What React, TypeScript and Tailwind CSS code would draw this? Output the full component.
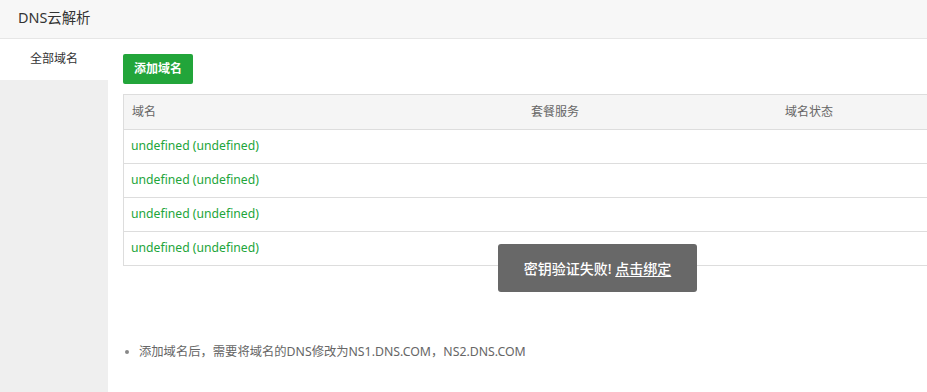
import React from "react";

const font = { fontFamily: '"Noto Sans", "Noto Sans CJK SC", sans-serif' };

export default function App() {
  const rows = [0, 1, 2, 3];
  return (
    <div className="relative w-[927px] h-[392px] overflow-hidden bg-white text-[#333]" style={font}>
      <div className="h-[39px] bg-[#f7f7f7] border-b border-[#e6e6e6] flex items-center pl-[18px] pb-[2px] text-[14.4px] text-[#333]">
        DNS云解析
      </div>
      <div className="flex h-[353px]">
        <div className="w-[108px] flex flex-col">
          <div className="h-[41px] bg-white flex items-center justify-center text-[12px] text-[#333] pb-[1px]">全部域名</div>
          <div className="flex-1 bg-[#efefef]" />
        </div>
        <div className="flex-1 overflow-hidden pl-[15px] pt-[15px]">
          <button className="h-[30px] w-[70px] rounded-[2px] bg-[#22a53a] text-white text-[12px] font-semibold flex items-center justify-center">
            添加域名
          </button>
          <div className="mt-[10px] w-[1000px] border border-[#dddddd] text-[12px]">
            <div className="grid grid-cols-[399px_254px_1fr] h-[34px] bg-[#f5f5f5] items-center text-[#666]">
              <div className="pl-[8px]">域名</div>
              <div className="pl-[8px]">套餐服务</div>
              <div className="pl-[8px]">域名状态</div>
            </div>
            {rows.map((r) => (
              <div key={r} className="grid grid-cols-[399px_254px_1fr] h-[34px] items-center border-t border-[#dddddd] text-[12.2px]">
                <div className="pl-[7px] text-[#22a53a]">undefined (undefined)</div>
                <div />
                <div />
              </div>
            ))}
          </div>
          <ul className="mt-[77px] text-[12.3px] text-[#666] pl-[2px]">
            <li className="flex items-center">
              <span className="w-[4px] h-[4px] rounded-full bg-[#888] mr-[10px]" />
              添加域名后，需要将域名的DNS修改为NS1.DNS.COM，NS2.DNS.COM
            </li>
          </ul>
        </div>
      </div>
      <div className="absolute left-[498px] top-[244px] w-[199px] h-[48px] rounded-[3px] bg-[#686868] flex items-center justify-center text-white text-[14px] font-medium">
        密钥验证失败!&nbsp;<span className="underline underline-offset-2">点击绑定</span>
      </div>
    </div>
  );
}
